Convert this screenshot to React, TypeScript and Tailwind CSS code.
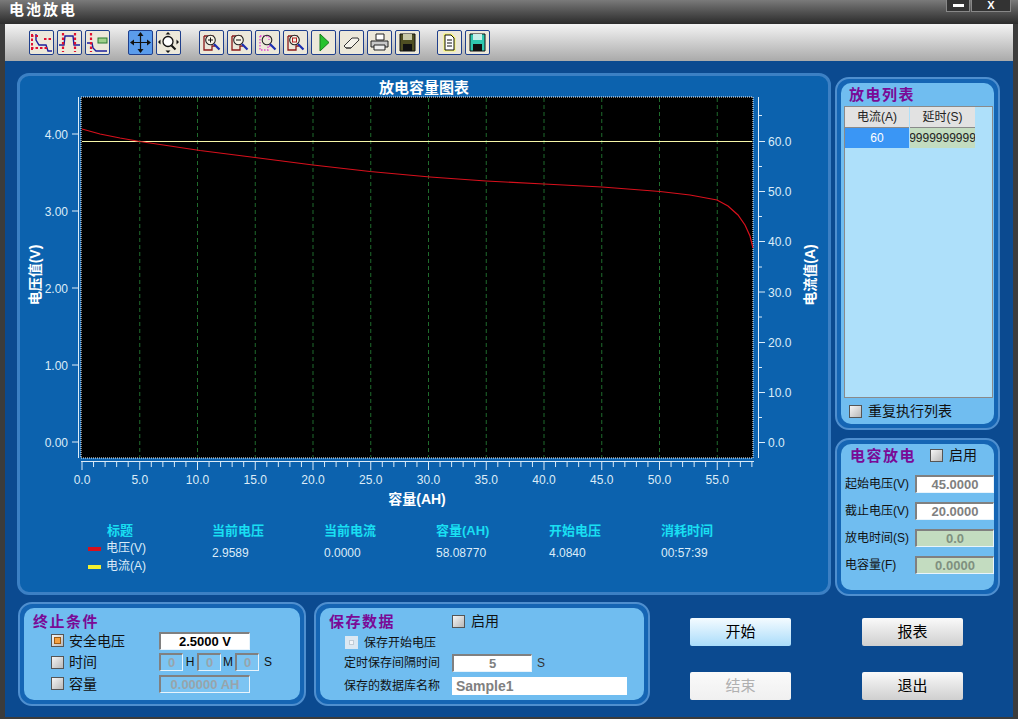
import type { ReactNode } from 'react';

const curve: [number, number][] = [
  [82, 129], [100, 134], [120, 138], [140, 141.5], [170, 146], [200, 150.5], [255, 157.5], [313, 165],
  [370, 171.5], [430, 177], [486, 181], [544, 184], [602, 187], [660, 191.5], [690, 195], [717, 200],
  [728, 206], [738, 215], [745, 225], [750, 236], [753, 248],
];

const leftTicks = [
  { y: 134, t: '4.00' },
  { y: 211, t: '3.00' },
  { y: 288, t: '2.00' },
  { y: 365, t: '1.00' },
  { y: 442, t: '0.00' },
];

const rightTicks = [
  { y: 141.5, t: '60.0' },
  { y: 191.5, t: '50.0' },
  { y: 241.5, t: '40.0' },
  { y: 292, t: '30.0' },
  { y: 342.5, t: '20.0' },
  { y: 392.5, t: '10.0' },
  { y: 442.5, t: '0.0' },
];

const xTicks = Array.from({ length: 59 }, (_, i) => i);
const majors = xTicks.filter((i) => i % 5 === 0);
const sx = (v: number) => 82 + v * 11.55;

function Chart() {
  return (
    <svg width="808" height="420" viewBox="20 92 808 420" className="block">
      <rect x="81" y="97" width="672" height="361" fill="#000" stroke="#fff" strokeDasharray="1 1" />
      {majors.slice(1).map((i) => (
        <line key={i} x1={sx(i)} x2={sx(i)} y1="98" y2="457" stroke="#1f6b2c" strokeDasharray="4 3" />
      ))}
      <line x1="82" x2="752" y1="141.5" y2="141.5" stroke="#f6f6a8" strokeWidth="1.2" />
      <polyline points={curve.map((p) => p.join(',')).join(' ')} fill="none" stroke="#d8101c" strokeWidth="1.2" />

      <g stroke="#dcecf8" fill="none">
        <line x1="78.5" x2="78.5" y1="97" y2="458" />
        {leftTicks.map((t) => (
          <line key={t.t} x1="72" x2="78" y1={t.y} y2={t.y} />
        ))}
        <line x1="758.5" x2="758.5" y1="97" y2="458" />
        {rightTicks.map((t) => (
          <line key={t.t} x1="758" x2="765" y1={t.y} y2={t.y} />
        ))}
        {[115.5, 166.5, 216.5, 267, 317, 367.5, 417.5].map((y) => (
          <line key={y} x1="758" x2="762" y1={y} y2={y} />
        ))}
        <line x1="81" x2="754" y1="461.5" y2="461.5" />
        {xTicks.map((i) => (
          <line key={i} x1={sx(i)} x2={sx(i)} y1="461" y2={i % 5 === 0 ? 470 : 467} />
        ))}
      </g>

      <g fill="#dcecf8" fontSize="12">
        {leftTicks.map((t) => (
          <text key={t.t} x="68" y={t.y + 4.5} textAnchor="end">{t.t}</text>
        ))}
        {rightTicks.map((t) => (
          <text key={t.t} x="768" y={t.y + 4.5}>{t.t}</text>
        ))}
        {majors.map((i) => (
          <text key={i} x={sx(i)} y="484" textAnchor="middle">{i}.0</text>
        ))}
      </g>

      <g fill="#fff" fontSize="14" fontWeight="700">
        <text x="417" y="504" textAnchor="middle">容量(AH)</text>
        <text transform="translate(40 275) rotate(-90)" textAnchor="middle">电压值(V)</text>
        <text transform="translate(815 275) rotate(-90)" textAnchor="middle">电流值(A)</text>
      </g>
    </svg>
  );
}

function Tool({ children, active }: { children: ReactNode; active?: boolean }) {
  return (
    <div className={`w-[25px] h-[25px] border border-[#1f3f8c] rounded-[2px] flex items-center justify-center ${active ? 'bg-[#5b9cec]' : 'bg-[#ece8da]'}`}>
      <svg width="23" height="23" viewBox="0 0 23 23" fill="none">{children}</svg>
    </div>
  );
}

const Page = ({ dash }: { dash?: boolean }) => (
  <path d="M4 5h9v4M4 5v14h8v-4h3" stroke={dash ? '#e040d0' : '#8a1a1a'} strokeWidth="1.3" strokeDasharray={dash ? '1.5 1.5' : undefined} />
);

const Lens = () => (
  <>
    <circle cx="10.5" cy="9" r="4.8" fill="#f8f4e6" stroke="#222" strokeWidth="1.1" />
    <path d="M14 13l5.5 5.5" stroke="#1c2fb0" strokeWidth="2.2" />
  </>
);

function Toolbar() {
  return (
    <div className="h-[37px] shrink-0 bg-gradient-to-b from-[#f4f4f4] to-[#aaaaaa] flex items-start pt-[6px] pl-6">
      <div className="flex gap-[3px]">
        <Tool>
          <path d="M6 3v6l3 5h7l2 6h4" stroke="#1c1f9c" strokeWidth="1.4" />
          <path d="M1 5h8M14 8h8M1 17h17M2 3v16" stroke="#e01030" strokeWidth="2" strokeDasharray="2.5 2" />
        </Tool>
        <Tool>
          <path d="M1 14h5l1-9h8l1 9h6" stroke="#1c1f9c" strokeWidth="1.4" />
          <path d="M5 2v19M17 2v19" stroke="#e01030" strokeWidth="2.2" strokeDasharray="2.5 2" />
        </Tool>
        <Tool>
          <path d="M1 12h5l1 5 3 3h11" stroke="#1c1f9c" strokeWidth="1.4" />
          <path d="M5 2v19" stroke="#e01030" strokeWidth="2.2" strokeDasharray="2.5 2" />
          <rect x="12" y="7" width="9" height="5" fill="#9fd08a" stroke="#2a7a30" />
        </Tool>
      </div>
      <div className="flex gap-[3px] ml-[18px]">
        <Tool active>
          <path d="M11.5 2v19M2 11.5h19" stroke="#111" strokeWidth="1.2" />
          <path d="M11.5 1l-3 4h6zM11.5 22l-3-4h6zM1 11.5l4-3v6zM22 11.5l-4-3v6z" fill="#111" />
        </Tool>
        <Tool>
          <circle cx="11" cy="10.5" r="5" stroke="#111" strokeWidth="1.3" fill="#fff" />
          <path d="M14.5 14.5l4 4" stroke="#111" strokeWidth="2" />
          <path d="M11 1l-2.5 2.5h5zM11 22l-2.5-2.5h5zM1 11l2.5-2.5v5zM22 11l-2.5-2.5v5z" fill="#111" />
        </Tool>
      </div>
      <div className="flex gap-[3px] ml-[18px]">
        <Tool>
          <Page />
          <Lens />
          <path d="M8 9h5M10.5 6.5v5" stroke="#111" />
        </Tool>
        <Tool>
          <Page />
          <Lens />
          <path d="M8 9h5" stroke="#111" />
        </Tool>
        <Tool>
          <Page dash />
          <circle cx="11" cy="9" r="4.8" stroke="#222" strokeWidth="1.1" />
          <path d="M14 13l5.5 5.5" stroke="#1c2fb0" strokeWidth="2.2" />
        </Tool>
        <Tool>
          <Page />
          <Lens />
          <rect x="8.5" y="7" width="4" height="4" stroke="#b01a1a" />
        </Tool>
        <Tool>
          <path d="M8 3l9 8.5L8 20z" fill="#26c22e" stroke="#157a1c" />
        </Tool>
        <Tool>
          <path d="M4 15l8-8h6l1 2-8 8H6z" fill="#f4f2ea" stroke="#333" />
          <path d="M4 15l2 2h5" stroke="#333" />
        </Tool>
        <Tool>
          <path d="M8 3h8v6H8z" fill="#fff" stroke="#222" />
          <path d="M3 10h17v6H3z" fill="#c8c8c8" stroke="#222" />
          <path d="M6 14h11v5H6z" fill="#eee" stroke="#222" />
        </Tool>
        <Tool>
          <path d="M4 3h15v17H4z" fill="#4f4f22" stroke="#111" />
          <path d="M7 3h9v6H7z" fill="#c8c8a8" />
          <path d="M7 13h9v7H7z" fill="#111" />
        </Tool>
      </div>
      <div className="flex gap-[3px] ml-[17px]">
        <Tool>
          <path d="M7 4h6l3 3v12H7z" fill="#f7f770" stroke="#f7f770" strokeWidth="3" />
          <path d="M7 4h6l3 3v12H7z" fill="#fff" stroke="#111" />
          <path d="M9 9h5M9 12h5M9 15h5" stroke="#111" />
        </Tool>
        <Tool>
          <path d="M4 3h15v17H4z" fill="#2fc8b0" stroke="#111" />
          <path d="M7 3h9v6H7z" fill="#c8f0e8" />
          <path d="M7 13h9v7H7z" fill="#111" />
        </Tool>
      </div>
    </div>
  );
}

function Check({ on, faint }: { on?: boolean; faint?: boolean }) {
  return (
    <span className={`shrink-0 w-[13px] h-[13px] flex items-center justify-center ${faint ? 'bg-[#dbe8f2]' : 'border border-[#555] bg-gradient-to-br from-[#f6f6f6] to-[#b8b8b8]'}`}>
      {on && <span className="w-[7px] h-[7px] bg-[#f4a040] border border-[#a05a10]" />}
      {faint && <span className="w-[5px] h-[5px] bg-[#f2f6fa] border border-[#c0ccd6]" />}
    </span>
  );
}

function Field({ value, w, tone = 'white' }: { value: string; w: string; tone?: 'white' | 'green' | 'blue' | 'strong' }) {
  const tones = {
    white: 'bg-white text-[#808080]',
    strong: 'bg-white text-black',
    green: 'bg-[#c3dcc0] text-[#7f907f]',
    blue: 'bg-[#7cc4f2] text-[#98a4ac]',
  };
  return (
    <div className={`${w} h-[18px] shrink-0 border-t-2 border-l-2 border-t-[#808080] border-l-[#808080] border-r border-b border-r-[#e8f4fc] border-b-[#e8f4fc] flex items-center justify-center text-[13px] font-bold leading-none ${tones[tone]}`}>
      {value}
    </div>
  );
}

function Panel({ className, children }: { className: string; children: ReactNode }) {
  return (
    <div className={`shrink-0 rounded-[14px] border-2 border-[#4f8fcf] bg-[#1565b4] p-1 ${className}`}>
      <div className="h-full rounded-[10px] bg-[#70bdf0]">{children}</div>
    </div>
  );
}

const Heading = ({ children }: { children: ReactNode }) => (
  <div className="text-[15px] font-bold text-[#7a0a96] tracking-[1.5px] leading-[15px]">{children}</div>
);

function Btn({ label, tone }: { label: string; tone: 'blue' | 'gray' | 'off' }) {
  const tones = {
    blue: 'from-[#f4fbff] to-[#a9dcfa] text-black',
    gray: 'from-[#fafafa] to-[#cfcfcf] text-black',
    off: 'from-[#fafafa] to-[#f0f0f0] text-[#b0b0b0]',
  };
  return (
    <div className={`w-[101px] h-[28px] rounded-[2px] bg-gradient-to-b flex items-center justify-center text-[15px] ${tones[tone]}`}>
      {label}
    </div>
  );
}

const stats = [
  { head: '当前电压', val: '2.9589' },
  { head: '当前电流', val: '0.0000' },
  { head: '容量(AH)', val: '58.08770' },
  { head: '开始电压', val: '4.0840' },
  { head: '消耗时间', val: '00:57:39' },
];

const capRows = [
  { label: '起始电压(V)', value: '45.0000', tone: 'white' as const },
  { label: '截止电压(V)', value: '20.0000', tone: 'white' as const },
  { label: '放电时间(S)', value: '0.0', tone: 'green' as const },
  { label: '电容量(F)', value: '0.0000', tone: 'green' as const },
];

export default function App() {
  return (
    <div className="w-[1018px] h-[719px] overflow-hidden flex flex-col bg-[#3c3c3c] font-['Liberation_Sans','Noto_Sans_CJK_SC',sans-serif]">
      <div className="h-6 shrink-0 bg-gradient-to-b from-[#7a7a7a] to-[#2c2c2c] flex items-start pl-[9px] pr-[7px]">
        <span className="text-[15px] font-bold text-white tracking-[2px] leading-[20px]">电池放电</span>
        <div className="ml-auto flex gap-px">
          <div className="w-6 h-3 bg-[#333] border border-t-0 border-[#888] flex items-center justify-center">
            <span className="w-[11px] h-[3px] bg-white" />
          </div>
          <div className="w-10 h-3 bg-[#333] border border-t-0 border-[#888] flex items-center justify-center text-[11px] font-bold text-white leading-none">X</div>
        </div>
      </div>

      <div className="flex-1 flex flex-col mx-[5px] mb-[2px] min-h-0">
        <Toolbar />
        <div className="flex-1 bg-[#0b4a90] pl-3 pt-3 flex flex-col gap-[6px] min-h-0">
          <div className="flex gap-[4px]">
            <div className="w-[814px] h-[522px] shrink-0 rounded-[12px] border-[3px] border-[#3c80c4] bg-[#0c62ae]">
              <div className="h-4 text-center text-[15px] font-bold text-white leading-[24px]">放电容量图表</div>
              <Chart />
              <div className="grid grid-cols-[124px_112px_112px_113px_112px_100px] pl-[68px] pt-[11px]">
                <div className="text-[13px] leading-[16px]">
                  <div className="pl-[19px] font-bold text-[#19dff2]">标题</div>
                  <div className="mt-[1px] flex flex-col gap-[1px] text-[12px] text-[#dcecf8] leading-[17px]">
                    <div className="flex items-center gap-[5px]">
                      <span className="w-[13px] h-[4px] bg-[#d8101c]" />电压(V)
                    </div>
                    <div className="flex items-center gap-[5px]">
                      <span className="w-[13px] h-[4px] bg-[#f0f030]" />电流(A)
                    </div>
                  </div>
                </div>
                {stats.map((s) => (
                  <div key={s.head} className="leading-[16px]">
                    <div className="text-[13px] font-bold text-[#19dff2]">{s.head}</div>
                    <div className="mt-[6px] text-[12px] text-[#dcecf8]">{s.val}</div>
                  </div>
                ))}
              </div>
            </div>

            <div className="w-[165px] shrink-0 pt-[4px] flex flex-col gap-[8px]">
              <Panel className="h-[353px]">
                <div className="h-full flex flex-col pl-[3px] pr-[1px] pt-[2px]">
                  <div className="h-[21px] pl-[5px] pt-[2px]"><Heading>放电列表</Heading></div>
                  <div className="h-[294px] border border-[#8a8a8a] bg-[#aee0fa]">
                    <div className="grid grid-cols-[64px_65px] gap-x-px text-[12px] text-[#222] text-center leading-[20px]">
                      <div className="bg-[#e2e2e2] border-b border-[#8a8a8a]">电流(A)</div>
                      <div className="bg-[#e2e2e2] border-b border-[#8a8a8a]">延时(S)</div>
                      <div className="bg-[#3a96f5] text-white">60</div>
                      <div className="bg-[#c3dcc0] overflow-hidden whitespace-nowrap flex justify-center">999999999999</div>
                    </div>
                  </div>
                  <div className="flex items-center h-[26px] pl-[5px] text-[14px] text-[#111]">
                    <Check />
                    <span className="pl-[6px]">重复执行列表</span>
                  </div>
                </div>
              </Panel>

              <Panel className="h-[158px]">
                <div className="pl-[4px] pr-0 pt-0">
                  <div className="flex items-center h-[22px] pl-[5px]">
                    <span className="w-[80px]"><Heading>电容放电</Heading></span>
                    <Check />
                    <span className="pl-[6px] text-[14px] text-[#111]">启用</span>
                  </div>
                  <div className="mt-[9px] flex flex-col gap-[9px]">
                    {capRows.map((r) => (
                      <div key={r.label} className="flex items-center justify-between text-[12px] text-[#111]">
                        <span>{r.label}</span>
                        <Field value={r.value} w="w-[79px]" tone={r.tone} />
                      </div>
                    ))}
                  </div>
                </div>
              </Panel>
            </div>
          </div>

          <div className="flex gap-[8px] pl-px">
            <Panel className="w-[288px] h-[104px]">
              <div className="pl-[9px] pt-[6px]">
                <Heading>终止条件</Heading>
                <div className="mt-[3px] pl-[18px] flex flex-col gap-[4.5px] text-[14px] text-[#111] leading-none">
                  <div className="flex items-center h-[17px]">
                    <Check on />
                    <span className="w-[95px] pl-[5px]">安全电压</span>
                    <Field value="2.5000 V" w="w-[91px]" tone="strong" />
                  </div>
                  <div className="flex items-center h-[17px]">
                    <Check />
                    <span className="w-[95px] pl-[5px]">时间</span>
                    <Field value="0" w="w-[24px]" tone="blue" />
                    <span className="w-[14px] text-center text-[12px]">H</span>
                    <Field value="0" w="w-[24px]" tone="blue" />
                    <span className="w-[14px] text-center text-[12px]">M</span>
                    <Field value="0" w="w-[24px]" tone="blue" />
                    <span className="w-[13px] text-right text-[12px]">S</span>
                  </div>
                  <div className="flex items-center h-[17px]">
                    <Check />
                    <span className="w-[95px] pl-[5px]">容量</span>
                    <Field value="0.00000 AH" w="w-[91px]" tone="blue" />
                  </div>
                </div>
              </div>
            </Panel>

            <Panel className="w-[336px] h-[104px]">
              <div className="pl-[9px] pt-[6px] text-[#111]">
                <div className="flex items-center h-[15px]">
                  <span className="w-[123px]"><Heading>保存数据</Heading></span>
                  <Check />
                  <span className="pl-[6px] text-[14px]">启用</span>
                </div>
                <div className="mt-[6px] pl-[16px] flex items-center h-[15px] text-[12px]">
                  <Check faint />
                  <span className="pl-[6px]">保存开始电压</span>
                </div>
                <div className="mt-[3px] pl-[15px] flex items-center h-[20px] text-[12px]">
                  <span className="w-[108px]">定时保存间隔时间</span>
                  <Field value="5" w="w-[80px]" />
                  <span className="pl-[5px] text-[#333]">S</span>
                </div>
                <div className="mt-[4px] pl-[15px] flex items-center h-[18px] text-[12px]">
                  <span className="w-[108px]">保存的数据库名称</span>
                  <div className="w-[175px] h-[18px] bg-white pl-[4px] text-[14px] font-bold text-[#808080] leading-[18px]">Sample1</div>
                </div>
              </div>
            </Panel>

            <div className="pl-[32px] pt-[16px] grid grid-cols-[101px_101px] gap-x-[71px] gap-y-[26px] content-start">
              <Btn label="开始" tone="blue" />
              <Btn label="报表" tone="gray" />
              <Btn label="结束" tone="off" />
              <Btn label="退出" tone="gray" />
            </div>
          </div>
        </div>
      </div>
    </div>
  );
}
